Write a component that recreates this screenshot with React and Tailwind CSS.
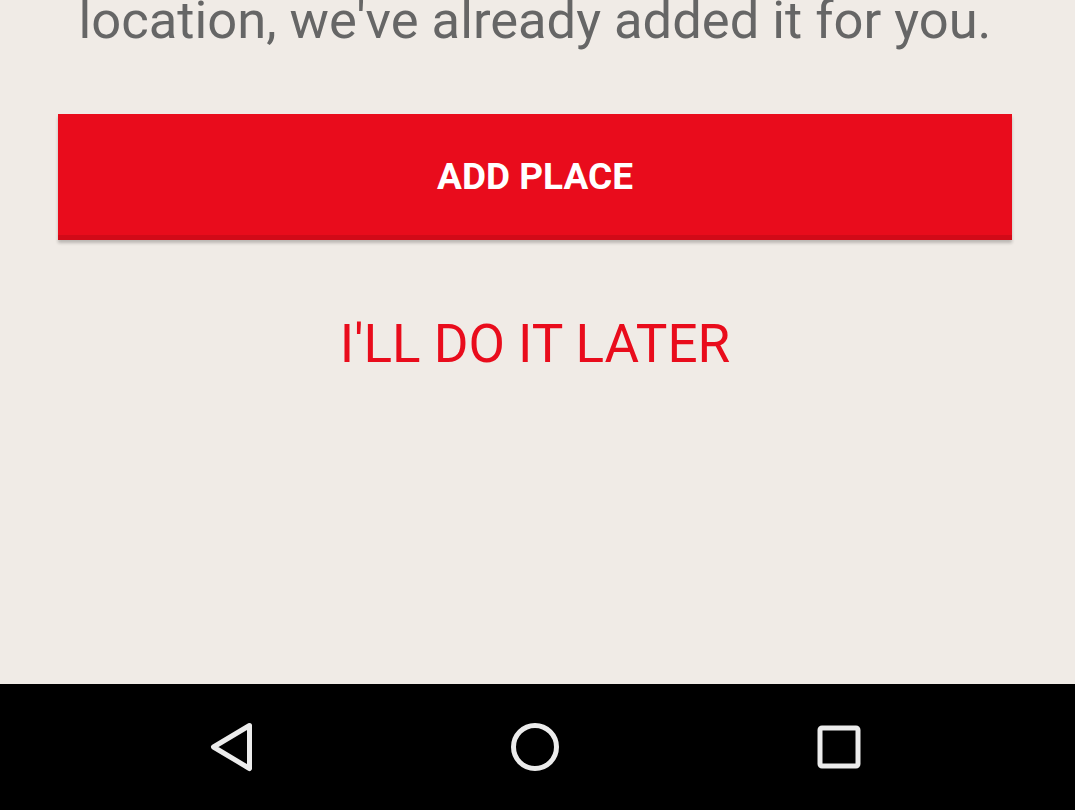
export default function App() {
  return (
    <div className="w-[1075px] h-[810px] overflow-hidden bg-[#f0ebe6] flex flex-col font-['Roboto',sans-serif]">
      <div className="flex-1 flex flex-col items-center pr-[5px]">
        <p className="-mt-[10px] text-[52.5px] leading-[60px] text-[#666666] text-center whitespace-nowrap">
          location, we've already added it for you.
        </p>
        <button className="mt-[64px] w-[954px] h-[126px] shrink-0 bg-[#e90c1c] border-b-[5px] border-[#d20a18] pt-[5px] shadow-[0_3px_3px_rgba(0,0,0,0.22)] text-white font-bold text-[37px] flex items-center justify-center">
          ADD PLACE
        </button>
        <button className="mt-[74px] text-[#e90c1c] text-[53px] leading-[60px]">
          I'LL DO IT LATER
        </button>
      </div>
      <div className="h-[126px] bg-black flex items-center justify-center pr-[5px]">
        <div className="w-[304px] flex justify-center">
          <svg width="48" height="52" viewBox="0 0 48 52">
            <path d="M42.5 4.5 L6.5 26 L42.5 47.5 Z" fill="none" stroke="#ececec" strokeWidth="5" strokeLinejoin="round" />
          </svg>
        </div>
        <div className="w-[304px] flex justify-center">
          <svg width="52" height="52" viewBox="0 0 52 52">
            <circle cx="26" cy="26" r="21.5" fill="none" stroke="#ececec" strokeWidth="5" />
          </svg>
        </div>
        <div className="w-[304px] flex justify-center">
          <svg width="48" height="48" viewBox="0 0 48 48">
            <rect x="5" y="5" width="38" height="38" rx="2" fill="none" stroke="#ececec" strokeWidth="5" />
          </svg>
        </div>
      </div>
    </div>
  );
}
